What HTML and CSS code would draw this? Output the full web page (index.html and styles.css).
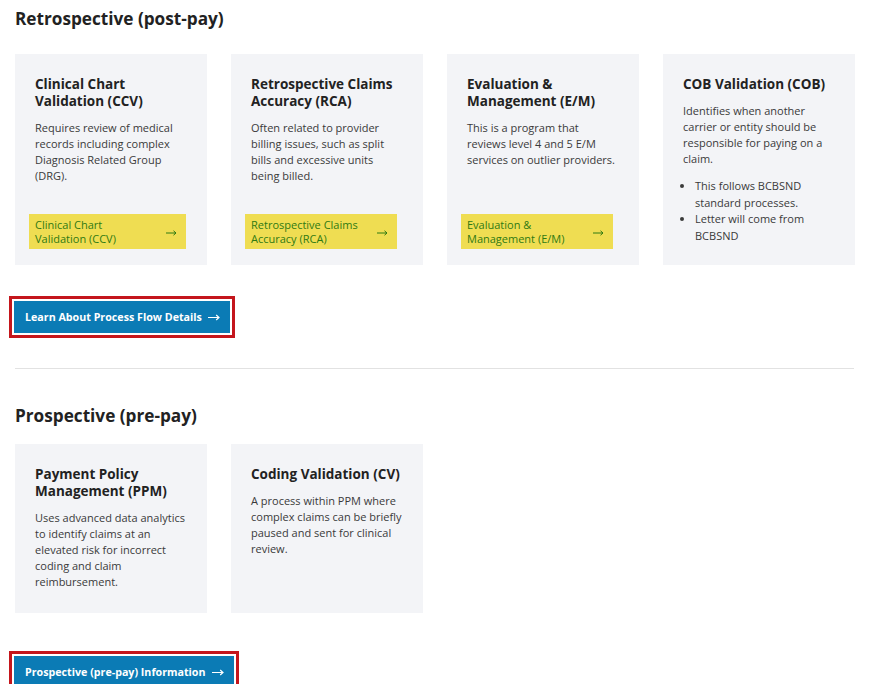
FILE: index.html
```html
<!DOCTYPE html>
<html lang="en">
<head>
    <meta charset="UTF-8">
    <meta name="viewport" content="width=device-width, initial-scale=1.0">
    <title>Claims Review Programs</title>
    <link rel="stylesheet" href="styles.css">
</head>
<body>
    <div class="container">
        <section class="section">
            <h2>Retrospective (post-pay)</h2>
            <div class="cards tall">
                <div class="card">
                    <h3>Clinical Chart Validation (CCV)</h3>
                    <p>Requires review of medical records including complex Diagnosis Related Group (DRG).</p>
                    <a href="#" class="card-link wide"><span>Clinical Chart Validation (CCV)</span><svg class="arrow" width="11" height="6" viewBox="0 0 11 6"><path d="M0 3h10M7.5 0.8L10 3 7.5 5.2" fill="none" stroke="currentColor" stroke-width="1"/></svg></a>
                </div>
                <div class="card">
                    <h3>Retrospective Claims Accuracy (RCA)</h3>
                    <p>Often related to provider billing issues, such as split bills and excessive units being billed.</p>
                    <a href="#" class="card-link"><span>Retrospective Claims Accuracy (RCA)</span><svg class="arrow" width="11" height="6" viewBox="0 0 11 6"><path d="M0 3h10M7.5 0.8L10 3 7.5 5.2" fill="none" stroke="currentColor" stroke-width="1"/></svg></a>
                </div>
                <div class="card">
                    <h3>Evaluation &amp; Management (E/M)</h3>
                    <p>This is a program that reviews level 4 and 5 E/M services on outlier providers.</p>
                    <a href="#" class="card-link"><span>Evaluation &amp; Management (E/M)</span><svg class="arrow" width="11" height="6" viewBox="0 0 11 6"><path d="M0 3h10M7.5 0.8L10 3 7.5 5.2" fill="none" stroke="currentColor" stroke-width="1"/></svg></a>
                </div>
                <div class="card">
                    <h3>COB Validation (COB)</h3>
                    <p>Identifies when another carrier or entity should be responsible for paying on a claim.</p>
                    <ul>
                        <li>This follows BCBSND standard processes.</li>
                        <li>Letter will come from BCBSND</li>
                    </ul>
                </div>
            </div>
            <a href="#" class="button">Learn About Process Flow Details <svg class="arrow" width="12" height="7" viewBox="0 0 12 7"><path d="M0 3.5h11M8.2 1L11 3.5 8.2 6" fill="none" stroke="currentColor" stroke-width="1.2"/></svg></a>
        </section>

        <hr>

        <section class="section">
            <h2 class="compact">Prospective (pre-pay)</h2>
            <div class="cards">
                <div class="card">
                    <h3>Payment Policy Management (PPM)</h3>
                    <p>Uses advanced data analytics to identify claims at an elevated risk for incorrect coding and claim reimbursement.</p>
                </div>
                <div class="card">
                    <h3>Coding Validation (CV)</h3>
                    <p>A process within PPM where complex claims can be briefly paused and sent for clinical review.</p>
                </div>
            </div>
            <a href="#" class="button second">Prospective (pre-pay) Information <svg class="arrow" width="12" height="7" viewBox="0 0 12 7"><path d="M0 3.5h11M8.2 1L11 3.5 8.2 6" fill="none" stroke="currentColor" stroke-width="1.2"/></svg></a>
        </section>
    </div>
</body>
</html>
```

FILE: styles.css
```css
* {
    box-sizing: border-box;
}
body {
    font-family: "Open Sans", Arial, sans-serif;
    margin: 0;
    padding: 0;
    background-color: #fff;
    color: #333;
}
.container {
    width: 869px;
    padding: 7px 15px 0;
}
h2 {
    font-size: 17.2px;
    line-height: 23px;
    font-weight: 700;
    color: #222;
    margin: 0 0 24px;
}
h2.compact {
    margin-bottom: 17px;
}
.cards {
    display: grid;
    grid-template-columns: repeat(4, 192px);
    gap: 24px;
}
.cards.tall .card {
    min-height: 211px;
    padding-bottom: 20px;
}
.card {
    background-color: #f3f4f7;
    padding: 22px 20px 23px;
    display: flex;
    flex-direction: column;
}
h3 {
    font-size: 13.5px;
    line-height: 17px;
    font-weight: 700;
    color: #222;
    margin: 0 0 10px;
}
.card p {
    font-size: 11px;
    line-height: 16px;
    margin: 0;
    color: #3a3a3a;
}
.card ul {
    font-size: 11px;
    line-height: 16.7px;
    color: #3a3a3a;
    margin: 11px 0 0;
    padding-left: 12px;
}
.card-link {
    margin: auto 0 -4px -6px;
    width: 152px;
    display: flex;
    align-items: center;
    justify-content: space-between;
    background-color: #efdd52;
    color: #2f7a12;
    font-size: 11px;
    line-height: 13.5px;
    padding: 4px 9px 4px 6px;
    text-decoration: none;
}
.card-link.wide {
    width: 157px;
}
.card-link span {
    width: 118px;
}
.card-link .arrow {
    margin-top: 2px;
}
.button {
    display: inline-flex;
    align-items: center;
    gap: 6px;
    margin: 36px 0 0 -1px;
    background-color: #0b7bb5;
    color: #fff;
    font-size: 10.7px;
    font-weight: 700;
    line-height: 16px;
    padding: 8px 10px 8px 11px;
    text-decoration: none;
    outline: 3px solid #c4161c;
    outline-offset: 2px;
}
.button .arrow {
    margin-top: 1px;
}
.button.second {
    margin-top: 43px;
}
hr {
    border: none;
    border-top: 1px solid #e2e2e2;
    margin: 35px 0 35px;
}
```
